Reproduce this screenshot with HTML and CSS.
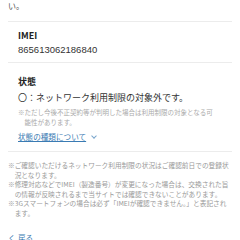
FILE: index.html
```html
<!DOCTYPE html>
<html lang="ja">
<head>
    <meta charset="UTF-8">
    <meta name="viewport" content="width=device-width, initial-scale=1.0">
    <title>ネットワーク利用制限確認</title>
    <link rel="stylesheet" href="styles.css">
</head>
<body>
    <div class="page">
        <p class="lead">い。</p>

        <div class="result">
            <div class="item">
                <h3 class="item-title">IMEI</h3>
                <div class="item-value">865613062186840</div>
            </div>
            <div class="item">
                <h3 class="item-title">状態</h3>
                <div class="status-text">〇：ネットワーク利用制限の対象外です。</div>
                <p class="note">※ただし今後不正契約等が判明した場合は利用制限の対象となる可能性があります。</p>
                <div class="toggle-row">
                    <a class="toggle" href="#">状態の種類について</a><span class="chevron"></span>
                </div>
            </div>
        </div>

        <ul class="notes">
            <li>※ご確認いただけるネットワーク利用制限の状況はご確認前日での登録状況となります。</li>
            <li>※修理対応などでIMEI（製造番号）が変更になった場合は、交換された旨の情報が反映されるまで当サイトでは確認できないことがあります。</li>
            <li>※3Gスマートフォンの場合は必ず「IMEIが確認できません。」と表記されます。</li>
        </ul>

        <a class="back" href="#"><span class="back-arrow">く</span>戻る</a>
    </div>
</body>
</html>
```
FILE: styles.css
```css
body {
    margin: 0;
    background-color: white;
    font-family: "Noto Sans CJK JP", "Noto Sans", sans-serif;
    color: #333;
}
.page {
    padding: 0 8px;
    margin-top: -4px;
}
.lead {
    margin: 0;
    font-size: 8px;
    line-height: 20px;
    color: #555;
}
.result {
    border-top: 1px solid #ececec;
    border-bottom: 1px solid #ececec;
    margin-top: 5px;
}
.item {
    padding: 0 14px 0 10px;
}
.item + .item {
    border-top: 1px solid #ececec;
}
.item:first-child {
    padding-top: 7px;
    padding-bottom: 5px;
}
.item:last-child {
    padding-top: 12px;
    padding-bottom: 8px;
}
.item-title {
    margin: 0;
    font-size: 9px;
    line-height: 14px;
    font-weight: bold;
    color: #222;
}
.item-value {
    font-family: "Liberation Sans", "Noto Sans CJK JP", sans-serif;
    font-size: 9.5px;
    line-height: 14px;
    color: #333;
}
.status-text {
    font-size: 9px;
    line-height: 18px;
    color: #333;
}
.note {
    margin: 0;
    font-size: 6.5px;
    line-height: 10px;
    color: #aaa;
    padding-left: 6.5px;
    text-indent: -6.5px;
}
.toggle-row {
    display: flex;
    align-items: center;
    margin-top: 4px;
    font-size: 7.6px;
    line-height: 12px;
}
.toggle {
    color: #3a7bb3;
    text-decoration: underline;
    text-underline-offset: 1px;
}
.chevron {
    width: 3px;
    height: 3px;
    border-right: 1px solid #7aa6cc;
    border-bottom: 1px solid #7aa6cc;
    transform: rotate(45deg);
    margin-left: 6px;
    margin-top: -2px;
}
.notes {
    list-style: none;
    margin: 9px 0 0;
    padding: 0;
    font-size: 6.7px;
    line-height: 9.5px;
    color: #999;
}
.notes li {
    padding-left: 6.7px;
    text-indent: -6.7px;
}
.back {
    display: block;
    margin-top: 14px;
    font-size: 7.6px;
    line-height: 12px;
    color: #3a7bb3;
    text-decoration: none;
}
.back-arrow {
    display: inline-block;
    width: 10px;
}
```
